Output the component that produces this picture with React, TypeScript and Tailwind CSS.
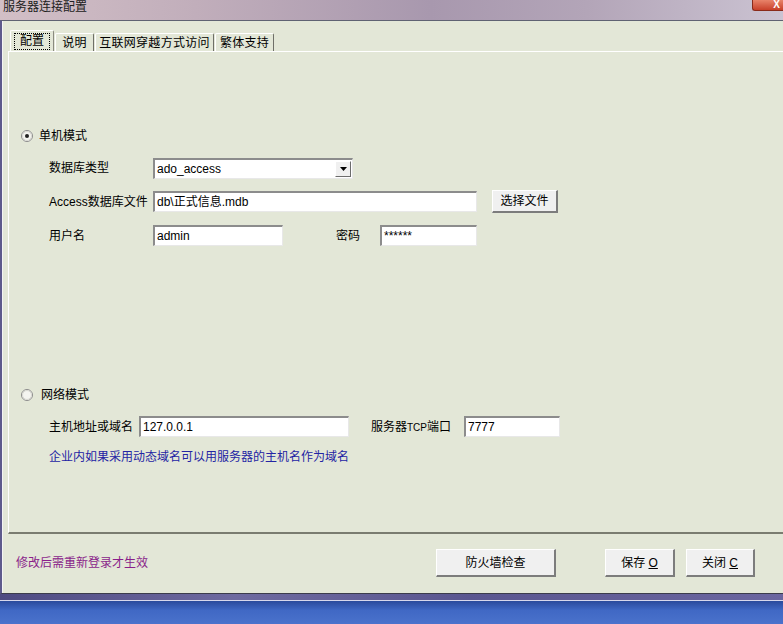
import React from 'react';

const cjk = { fontFamily: '"Liberation Sans", "Noto Sans CJK SC", sans-serif' };

function Radio({ checked }: { checked?: boolean }) {
  return (
    <svg width="12" height="12" viewBox="0 0 12 12" className="shrink-0">
      <circle cx="6" cy="6" r="5.5" fill="#ffffff" stroke="#8a8a8a" />
      <circle cx="6" cy="6" r="4.5" fill="#f4f4f0" stroke="#d8d8d0" />
      {checked && <circle cx="6" cy="6" r="2" fill="#222222" />}
    </svg>
  );
}

function Field({ value, className }: { value: string; className: string }) {
  return (
    <div
      className={`h-[21px] flex items-center bg-white pl-[2px] text-[12px] text-black border-t-2 border-l-2 border-t-[#8c8c8c] border-l-[#8c8c8c] border-b border-r border-b-[#e8e8e8] border-r-[#e8e8e8] ${className}`}
      style={cjk}
    >
      {value}
    </div>
  );
}

function Btn({ children, className }: { children: React.ReactNode; className: string }) {
  return (
    <div
      className={`flex items-center justify-center bg-[#f0f0f0] text-[12px] text-black border-t border-l border-t-white border-l-white border-b-2 border-r-2 border-b-[#7c7c7c] border-r-[#7c7c7c] ${className}`}
      style={cjk}
    >
      {children}
    </div>
  );
}

export default function App() {
  const tabs = [
    { label: '说明', w: 'w-[39px]' },
    { label: '互联网穿越方式访问', w: 'w-[119px]' },
    { label: '繁体支持', w: 'w-[59px]' },
  ];

  return (
    <div className="relative w-[783px] h-[624px] overflow-hidden flex flex-col bg-[#3c62bf]" style={cjk}>
      {/* title bar */}
      <div className="h-[20px] shrink-0 bg-[linear-gradient(90deg,#d2bfc6,#c1aebb_25%,#a898ae_55%,#b3a5b8_75%,#cbc3d2)] pl-[3px] text-[12px] leading-[14px] text-[#202020]">
        服务器连接配置
      </div>
      <div className="absolute top-0 right-0 w-[31px] h-[11px] rounded-bl-[3px] bg-[linear-gradient(180deg,#e8836a,#c8402a)] border-l border-b border-[#8a2a1a] flex items-start justify-end pr-[3px] text-[10px] leading-[9px] font-bold text-white">
        X
      </div>

      {/* window body */}
      <div className="h-[574px] shrink-0 flex flex-col bg-[#e3e7d7] border-t border-t-[#5f6272] border-l-2 border-l-[#5e5a8c] border-b border-b-[#3c3c4c] shadow-[inset_1px_0_0_#f4f4f4]">
        {/* tabs */}
        <div className="mt-[10px] h-[20px] flex items-end pl-[8px] gap-[1px]">
          <div className="h-[21px] w-[44px] flex items-center justify-center bg-[#e3e7d7] border-t border-l border-t-white border-l-white border-r border-r-[#8a8a80] rounded-t-[2px] text-[12px] text-black">
            <span className="outline-1 outline-dotted outline-black px-[5px] leading-[15px]">配置</span>
          </div>
          {tabs.map((t) => (
            <div
              key={t.label}
              className={`h-[18px] ${t.w} flex items-center justify-center bg-[#e3e7d7] border-t border-l border-t-white border-l-white border-r border-r-[#6f6f68] rounded-t-[2px] text-[12px] tracking-[0.3px] text-black`}
            >
              {t.label}
            </div>
          ))}
        </div>

        {/* panel */}
        <div className="ml-[6px] h-[483px] shrink-0 flex flex-col border-t border-l border-t-white border-l-white border-b-2 border-b-[#7a7c70]">
          <div className="mt-[74px] h-[20px] flex items-center pl-[12px] gap-[6px] text-[12px] text-black">
            <Radio checked />
            <span>单机模式</span>
          </div>

          <div className="mt-[12px] h-[20px] flex items-center pl-[40px] text-[12px] text-black">
            <span className="w-[104px]">数据库类型</span>
            <div className="w-[200px] h-[21px] flex items-center bg-white border-t-2 border-l-2 border-t-[#8c8c8c] border-l-[#8c8c8c] border-b border-r border-b-[#e8e8e8] border-r-[#e8e8e8]">
              <span className="flex-1 pl-[2px] text-[12px]">ado_access</span>
              <div className="w-[16px] h-[16px] mr-[1px] flex items-center justify-center bg-[#f0f0f0] border-t border-l border-t-white border-l-white border-b border-r border-b-[#6c6c6c] border-r-[#6c6c6c]">
                <svg width="7" height="4" viewBox="0 0 7 4">
                  <path d="M0 0h7L3.5 4z" fill="#000" />
                </svg>
              </div>
            </div>
          </div>

          <div className="mt-[12px] h-[23px] flex items-center pl-[40px] text-[12px] text-black">
            <span className="w-[104px]">Access数据库文件</span>
            <Field value="db\正式信息.mdb" className="w-[324px]" />
            <Btn className="ml-[15px] w-[66px] h-[23px]">选择文件</Btn>
          </div>

          <div className="mt-[12px] h-[21px] flex items-center pl-[40px] text-[12px] text-black">
            <span className="w-[104px]">用户名</span>
            <Field value="admin" className="w-[130px]" />
            <span className="ml-[53px] w-[44px]">密码</span>
            <Field value="******" className="w-[97px] text-[9px]" />
          </div>

          <div className="mt-[139px] h-[20px] flex items-center pl-[12px] gap-[8px] text-[12px] text-black">
            <Radio />
            <span>网络模式</span>
          </div>

          <div className="mt-[11px] h-[21px] flex items-center pl-[40px] text-[12px] text-black">
            <span className="w-[90px]">主机地址或域名</span>
            <Field value="127.0.0.1" className="w-[210px]" />
            <span className="ml-[22px] w-[93px]">
              服务器<span className="text-[10px]">TCP</span>端口
            </span>
            <Field value="7777" className="w-[96px]" />
          </div>

          <div className="mt-[12px] h-[16px] flex items-center pl-[40px] text-[12px] text-[#2424a4]">
            企业内如果采用动态域名可以用服务器的主机名作为域名
          </div>
        </div>

        {/* footer */}
        <div className="mt-[15px] h-[28px] flex items-center pl-[14px] text-[12px]">
          <span className="w-[420px] text-[#8a1f8a]">修改后需重新登录才生效</span>
          <Btn className="w-[120px] h-[28px]">防火墙检查</Btn>
          <Btn className="ml-[49px] w-[70px] h-[28px]">
            保存&nbsp;<span className="underline">O</span>
          </Btn>
          <Btn className="ml-[11px] w-[69px] h-[28px]">
            关闭&nbsp;<span className="underline">C</span>
          </Btn>
        </div>
      </div>

      {/* window bottom frame */}
      <div className="h-[6px] shrink-0 bg-[linear-gradient(90deg,#4e4a82,#6e6aa0_30%,#5a5690_60%,#6b66a0)]" />
      <div className="h-[1px] shrink-0 bg-[#d8d8ec]" />
      <div className="flex-1 bg-[linear-gradient(180deg,#2a4a9c,#4068c4_40%,#4a72cc)]" />
    </div>
  );
}
